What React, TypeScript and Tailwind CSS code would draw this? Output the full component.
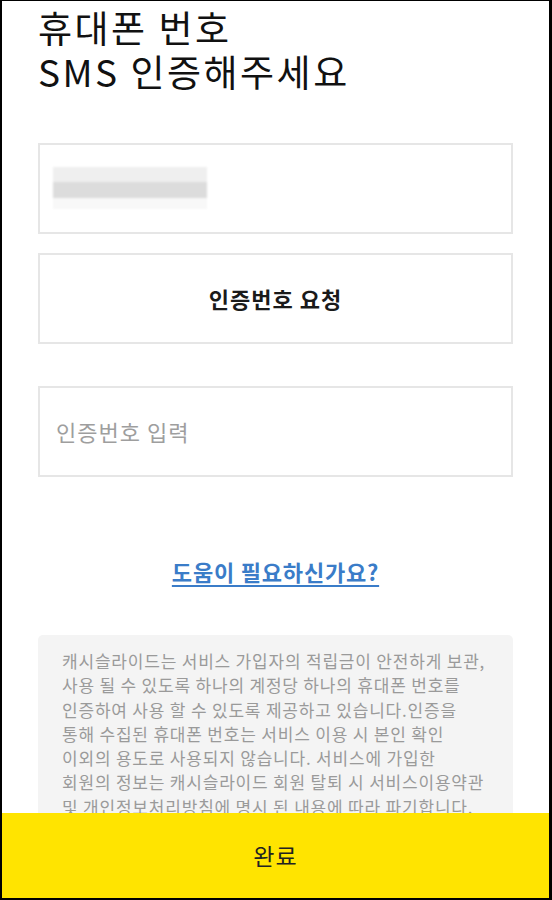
import React from "react";

const lines = [
  "캐시슬라이드는 서비스 가입자의 적립금이 안전하게 보관,",
  "사용 될 수 있도록 하나의 계정당 하나의 휴대폰 번호를",
  "인증하여 사용 할 수 있도록 제공하고 있습니다.인증을",
  "통해 수집된 휴대폰 번호는 서비스 이용 시 본인 확인",
  "이외의 용도로 사용되지 않습니다. 서비스에 가입한",
  "회원의 정보는 캐시슬라이드 회원 탈퇴 시 서비스이용약관",
  "및 개인정보처리방침에 명시 된 내용에 따라 파기합니다.",
];

export default function App() {
  return (
    <div
      className="relative w-[552px] h-[900px] overflow-hidden bg-white border-black border-t-[1px] border-l-[2px] border-r-[3px] border-b-[2px] flex flex-col"
      style={{ fontFamily: '"Noto Sans CJK KR", "Noto Sans", sans-serif' }}
    >
      <div className="pl-[36px] pt-[4px] text-[37px] leading-[44px] text-[#111] tracking-[2.5px]">
        <div>휴대폰 번호</div>
        <div>SMS 인증해주세요</div>
      </div>

      <div className="mx-[36px] mt-[50px] flex flex-col">
        <div className="relative h-[91px] border-2 border-[#e6e6e6]">
          <div className="absolute left-[13px] top-[22px] w-[154px] h-[42px] blur-[1px]">
            <div className="h-[15px] bg-[#efefef]" />
            <div className="h-[16px] bg-[#dcdcdc]" />
            <div className="h-[11px] bg-[#f8f8f8]" />
          </div>
        </div>

        <div className="mt-[19px] h-[91px] border-2 border-[#e6e6e6] flex items-center justify-center text-[22px] tracking-[1px] font-bold text-[#1a1a1a]">
          인증번호 요청
        </div>

        <div className="mt-[42px] h-[91px] border-2 border-[#e6e6e6] flex items-center pl-[16px] text-[22px] tracking-[1px] text-[#9e9e9e]">
          인증번호 입력
        </div>

        <div className="mt-[78px] flex justify-center">
          <span className="text-[22px] tracking-[0.8px] font-bold text-[#3a7cc8] underline underline-offset-[4px] decoration-2">
            도움이 필요하신가요?
          </span>
        </div>

        <div className="mt-[47px] rounded-[5px] bg-[#f4f4f4] px-[24px] pt-[14px] pb-[20px] text-[17px] tracking-[0.8px] leading-[24.3px] text-[#9a9a9a] whitespace-nowrap">
          {lines.map((l, i) => (
            <div key={i}>{l}</div>
          ))}
        </div>
      </div>

      <div className="absolute left-0 right-0 bottom-0 h-[85px] bg-[#ffe400] flex items-center justify-center text-[23px] tracking-[1px] text-[#222]">
        완료
      </div>
    </div>
  );
}
